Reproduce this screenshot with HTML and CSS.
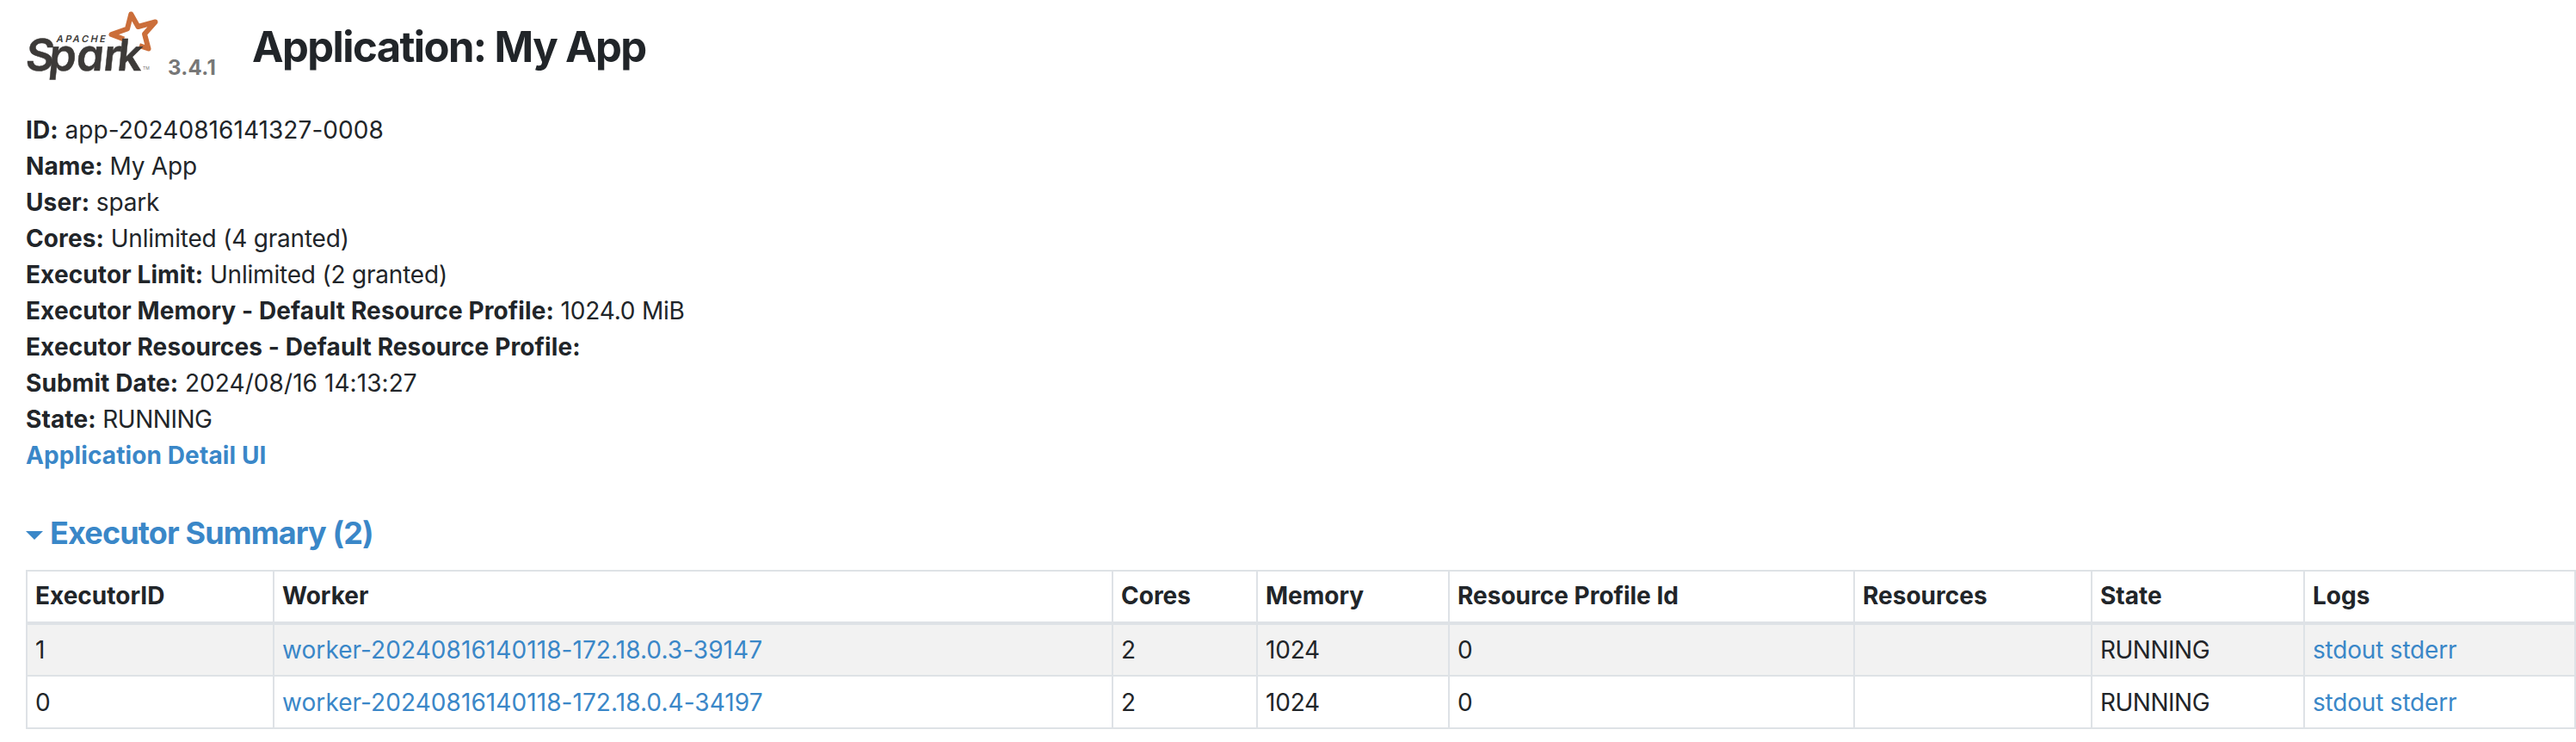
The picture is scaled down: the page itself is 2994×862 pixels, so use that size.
FILE: index.html
```html
<!DOCTYPE html>
<html lang="en">
<head>
<meta charset="utf-8">
<title>Spark Master: Application: My App</title>
<link rel="stylesheet" href="styles.css">
</head>
<body>
<main class="page">
  <header class="header">
    <svg class="logo" width="156" height="84" viewBox="30 12 156 84">
      <path class="logo-star" d="M144 45.500 L129.500 40 L148 33.500 L152.300 16.500 L160.500 31 L180.500 25.500 L168 39.500 L172.500 56.500 L162 53"/>
      <text class="logo-word" transform="translate(0 82) skewX(-6)" x="28.500 55.500 87.500 119 135">Spark</text>
      <text class="logo-apache" transform="translate(0 49) skewX(-12)" x="65" y="0" textLength="57">APACHE</text>
      <text class="logo-tm" x="166" y="81">TM</text>
    </svg>
    <span class="version">3.4.1</span>
    <h3 class="title">Application: My App</h3>
  </header>
  <ul class="details">
    <li><strong>ID:</strong> <span class="digits">app-20240816141327-0008</span></li>
    <li><strong>Name:</strong> My App</li>
    <li><strong>User:</strong> spark</li>
    <li><strong>Cores:</strong> Unlimited (4 granted)</li>
    <li><strong>Executor Limit:</strong> Unlimited (2 granted)</li>
    <li><strong>Executor Memory - Default Resource Profile:</strong> 1024.0 MiB</li>
    <li><strong>Executor Resources - Default Resource Profile:</strong></li>
    <li><strong>Submit Date:</strong> <span class="digits">2024/08/16 14:13:27</span></li>
    <li><strong>State:</strong> <span class="caps">RUNNING</span></li>
    <li><strong><a href="#">Application Detail UI</a></strong></li>
  </ul>
  <h4 class="section"><a href="#"><span class="arrow"></span>Executor Summary (2)</a></h4>
  <table class="executors">
    <colgroup><col class="c-id"><col class="c-worker"><col class="c-cores"><col class="c-memory"><col class="c-profile"><col class="c-resources"><col class="c-state"><col class="c-logs"></colgroup>
    <thead>
      <tr><th>ExecutorID</th><th>Worker</th><th>Cores</th><th>Memory</th><th>Resource Profile Id</th><th>Resources</th><th>State</th><th>Logs</th></tr>
    </thead>
    <tbody>
      <tr><td>1</td><td class="digits"><a href="#">worker-20240816140118-172.18.0.3-39147</a></td><td>2</td><td>1024</td><td>0</td><td></td><td class="caps">RUNNING</td><td><a href="#">stdout</a> <a href="#">stderr</a></td></tr>
      <tr><td>0</td><td class="digits"><a href="#">worker-20240816140118-172.18.0.4-34197</a></td><td>2</td><td>1024</td><td>0</td><td></td><td class="caps">RUNNING</td><td><a href="#">stdout</a> <a href="#">stderr</a></td></tr>
    </tbody>
  </table>
</main>
</body>
</html>
```

FILE: styles.css
```css
* { box-sizing: border-box; }
body {
  margin: 0;
  background: #fff;
  color: #212529;
  font: 400 28px/42px Inter, "Liberation Sans", sans-serif;
  letter-spacing: -.2px;
}
a { color: #3a87c8; text-decoration: none; }
strong, th { font-weight: 700; }
strong { letter-spacing: .11px; }
.digits { letter-spacing: .07px; }
.caps { letter-spacing: -.5px; }
.page { padding: 12px 0 0 30px; }
.header { display: flex; height: 118px; align-items: flex-start; }
.logo { display: block; flex: none; overflow: visible; }
.logo-star { fill: none; stroke: #cb6e3a; stroke-width: 6; stroke-linejoin: round; }
.logo-word { font: 600 51px Inter, sans-serif; fill: #3c3a38; letter-spacing: 0; stroke: #3c3a38; stroke-width: .5; font-feature-settings: "cv11"; }
.logo-apache { font: 600 11px Inter, sans-serif; fill: #3c3a38; letter-spacing: 0; }
.logo-tm { font: 400 5px Inter, sans-serif; fill: #777; letter-spacing: 0; }
.version { margin: 49px 0 0 9px; width: 98px; font-size: 24px; line-height: 36px; font-weight: 700; color: #777; letter-spacing: .3px; }
.title { margin: 14px 0 0; font-size: 49px; line-height: 58px; font-weight: 700; letter-spacing: -1.6px; }
.details { list-style: none; margin: 0; padding: 0; }
.section { margin: 47px 0 21px; font-size: 36px; line-height: 44px; font-weight: 700; letter-spacing: -.86px; }
.section a { display: flex; align-items: center; }
.arrow { width: 20px; height: 10px; margin: 6px 8px 0 0; background: currentColor; clip-path: polygon(0 0, 100% 0, 50% 100%); }
.executors { width: 2964px; table-layout: fixed; border-collapse: collapse; }
.executors th, .executors td { height: 61px; padding: 8px 8px 8px 9px; border: 2px solid #dee2e6; text-align: left; line-height: 42px; }
.executors thead th { padding: 7px 8px 9px 9px; border-bottom-width: 4px; letter-spacing: 0; }
.executors tbody tr:nth-child(odd) { background: #f2f2f2; }
.c-id { width: 287px; }
.c-worker { width: 975px; }
.c-cores { width: 168px; }
.c-memory { width: 223px; }
.c-profile { width: 471px; }
.c-resources { width: 276px; }
.c-state { width: 247px; }
```
